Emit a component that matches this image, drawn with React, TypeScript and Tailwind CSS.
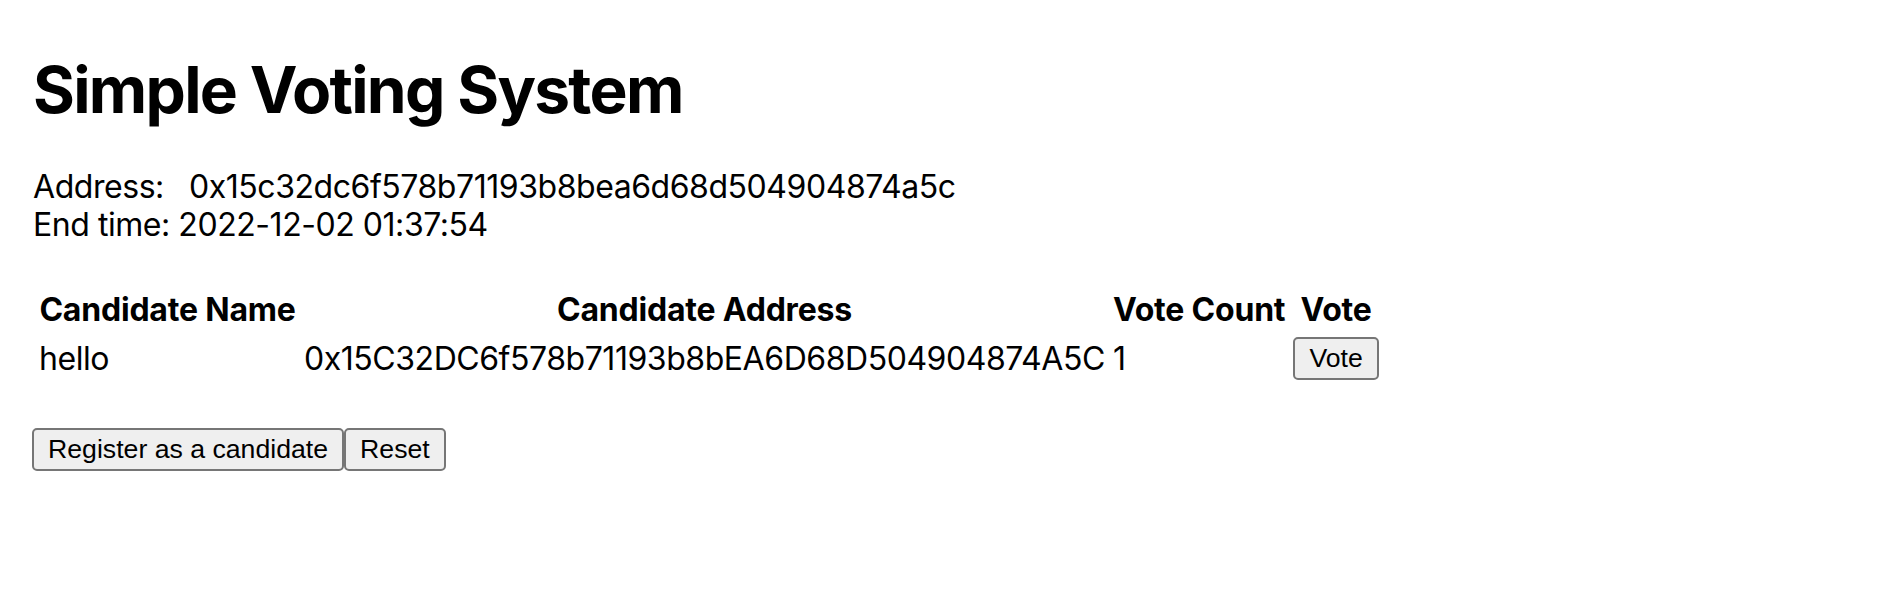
const candidates = [
  {
    name: 'hello',
    address: '0x15C32DC6f578b71193b8bEA6D68D504904874A5C',
    votes: 1,
  },
]

function NativeButton({ children }: { children: React.ReactNode }) {
  return (
    <button
      type="button"
      className="h-[43px] rounded-[5px] border-2 border-[#767676] bg-[#efefef] px-[14px] font-['Liberation_Sans',Arial,sans-serif] text-[26.67px] leading-none tracking-normal text-black"
    >
      {children}
    </button>
  )
}

export default function App() {
  return (
    <div className="min-h-[602px] bg-white pl-[32px] pt-[51px] font-['Inter',sans-serif] text-black">
      <h1 className="m-0 ml-px text-[64px] font-bold leading-[77px] tracking-[-1.7px]">Simple Voting System</h1>

      <div className="ml-px mt-[40px] text-[32px] leading-[38px] tracking-[-0.45px]">
        <div>
          <span className="inline-block w-[156px]">Address:</span>
          <span>0x15c32dc6f578b71193b8bea6d68d504904874a5c</span>
        </div>
        <div>End time: 2022-12-02 01:37:54</div>
      </div>

      <table className="ml-px mt-[41px] border-separate border-spacing-[4px] text-[32px] leading-[38px] tracking-[-0.45px]">
        <thead>
          <tr>
            <th className="w-[261px] whitespace-nowrap p-[2px] text-center font-bold tracking-[-0.2px]">Candidate Name</th>
            <th className="w-[804px] whitespace-nowrap p-[2px] text-center font-bold tracking-[-0.2px]">Candidate Address</th>
            <th className="w-[176px] whitespace-nowrap p-[2px] text-center font-bold tracking-[-0.2px]">Vote Count</th>
            <th className="w-[89px] whitespace-nowrap p-[2px] text-center font-bold tracking-[-0.2px]">Vote</th>
          </tr>
        </thead>
        <tbody>
          {candidates.map((c) => (
            <tr key={c.address}>
              <td className="whitespace-nowrap p-[2px]">{c.name}</td>
              <td className="whitespace-nowrap p-[2px]">{c.address}</td>
              <td className="whitespace-nowrap p-[2px]">{c.votes}</td>
              <td className="p-[2px]">
                <NativeButton>Vote</NativeButton>
              </td>
            </tr>
          ))}
        </tbody>
      </table>

      <div className="mt-[42px] flex">
        <NativeButton>Register as a candidate</NativeButton>
        <NativeButton>Reset</NativeButton>
      </div>
    </div>
  )
}
